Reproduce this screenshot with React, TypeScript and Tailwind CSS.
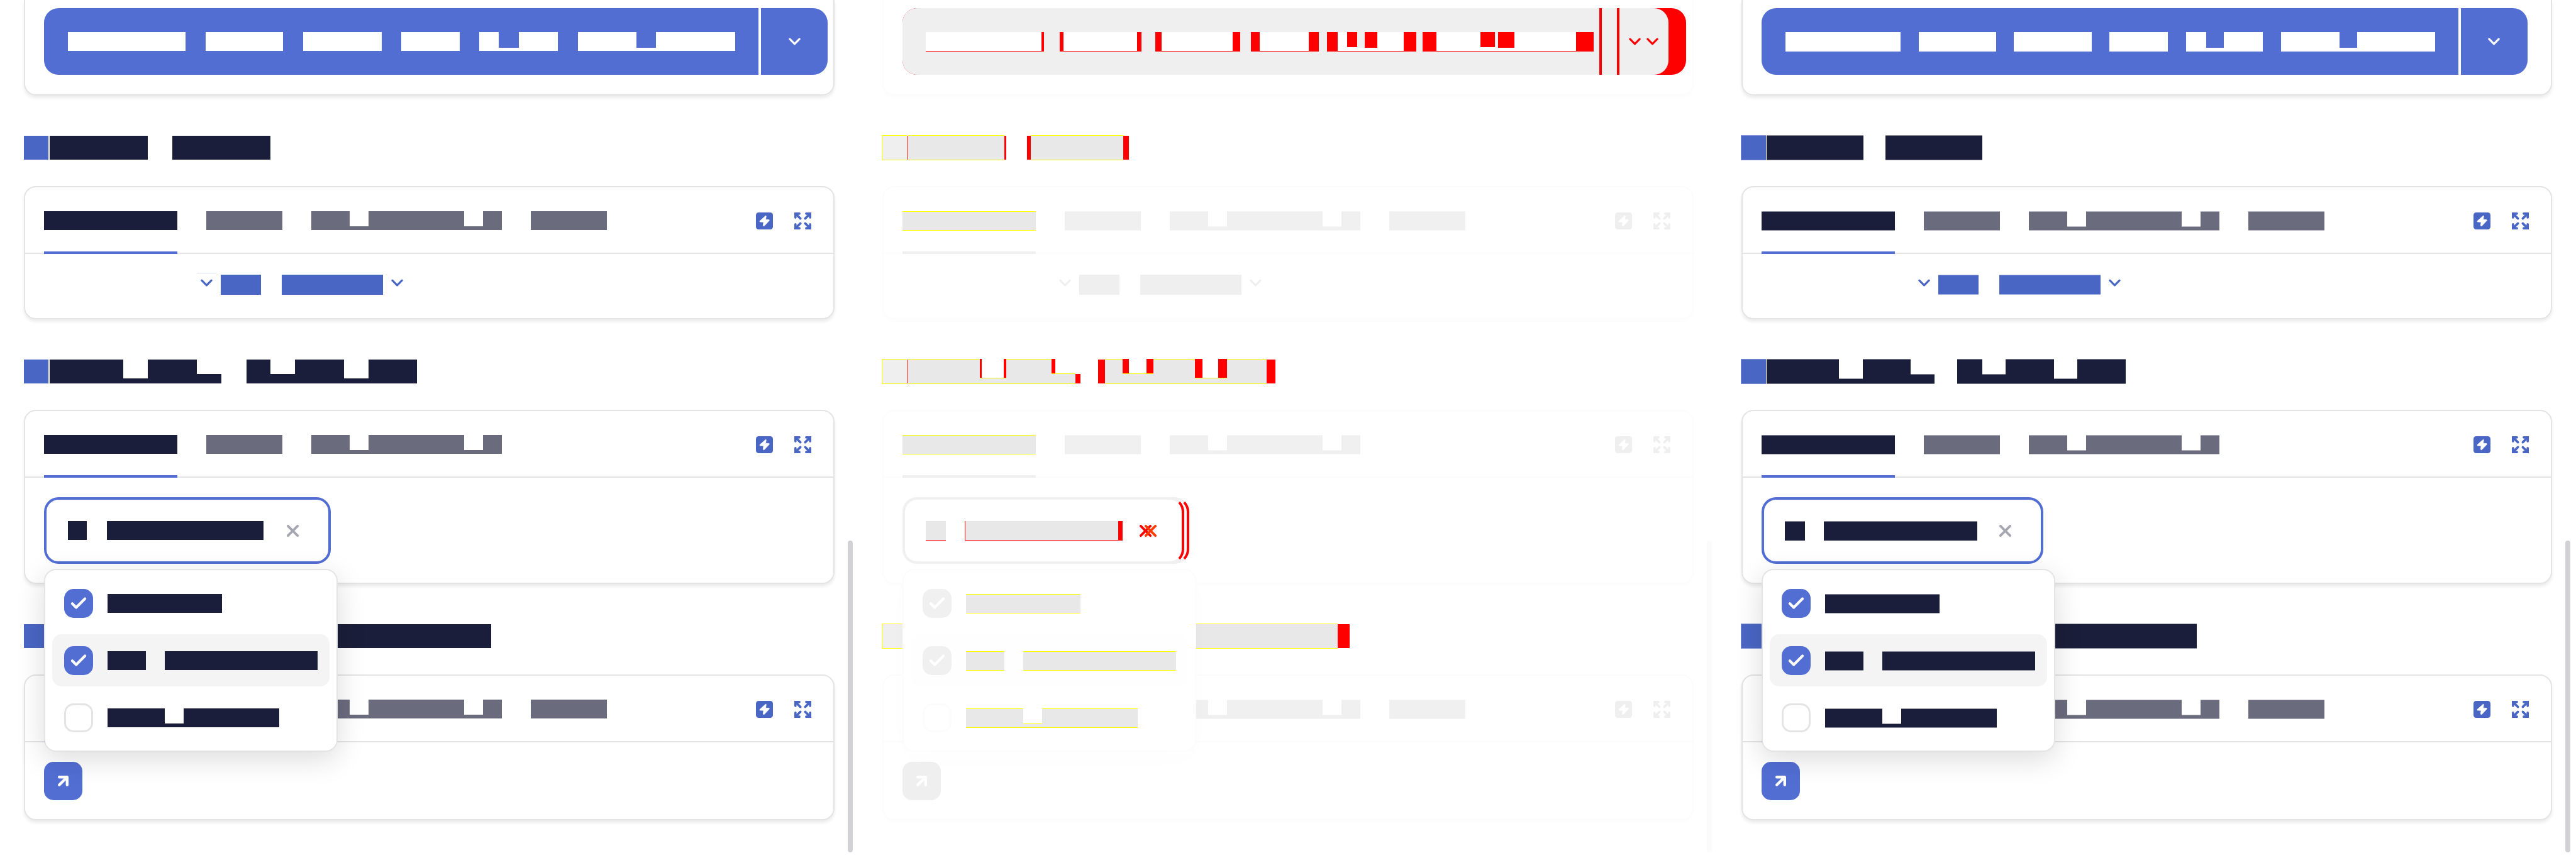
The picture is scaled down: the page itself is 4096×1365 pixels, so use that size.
import React from "react";

type Variant = "before" | "diff" | "after";

/** A stretch of masked text: width, fill, height removed from its top, fill of the removed part. */
type Run = [number, string, number?, string?];

const RED = "bg-[#ff0000]";

interface Theme {
  card: string;
  rule: string;
  primary: string;
  underline: string;
  ink: string;
  inkField: string;
  muted: string;
  link: string;
  mark: string;
  icon: string;
  field: string;
  menu: string;
  active: string;
  checked: string;
  unchecked: string;
  thumb: string;
  textHeight: string;
  headingHeight: string;
}

const themes: Record<Variant, Theme> = {
  before: {
    card: "border-[#e4e4e5] shadow-[0_4px_5px_rgba(0,0,0,0.08)]",
    rule: "border-[#e4e4e5]",
    primary: "bg-[#526ed3]",
    underline: "border-[#526ed3]",
    ink: "bg-[#1b1e3a]",
    inkField: "bg-[#1b1e3a]",
    muted: "bg-[#6a6b7d]",
    link: "bg-[#4a66c4]",
    mark: "bg-[#4a66c4]",
    icon: "text-[#4a66c4]",
    field: "border-[#526ed3]",
    menu: "border-[#e4e4e5] shadow-[0_12px_46px_rgba(0,0,0,0.14)]",
    active: "bg-[#f4f4f5]",
    checked: "bg-[#526ed3]",
    unchecked: "border-[3px] border-[#e4e4e5]",
    thumb: "bg-[#d1d1d6]",
    textHeight: "h-[30px]",
    headingHeight: "h-[38px]",
  },
  diff: {
    card: "border-[#fcfcfc] shadow-[0_4px_5px_rgba(0,0,0,0.01)]",
    rule: "border-[#fcfcfc]",
    primary: "bg-[#efefef]",
    underline: "border-[#efefef]",
    ink: "bg-[#e8e8e8] border-y border-[#ffff00]",
    inkField: "bg-[#e8e8e8] border-b border-[#ff0000]",
    muted: "bg-[#f0f0f0] border-y border-[#f6f6f6]",
    link: "bg-[#efefef]",
    mark: "bg-[#efefef] border-y border-l border-[#ffff00]",
    icon: "text-[#efefef]",
    field: "border-[#f0f0f0]",
    menu: "border-[#fcfcfc] shadow-[0_12px_46px_rgba(0,0,0,0.012)]",
    active: "bg-[#fefefe]",
    checked: "bg-[#f0f0f0]",
    unchecked: "border-[3px] border-[#fcfcfc]",
    thumb: "bg-[#fbfbfb]",
    textHeight: "-mb-px h-[31px]",
    headingHeight: "-my-px h-[40px]",
  },
  after: {
    card: "border-[#e4e4e5] shadow-[0_4px_5px_rgba(0,0,0,0.08)]",
    rule: "border-[#e4e4e5]",
    primary: "bg-[#526ed3]",
    underline: "border-[#526ed3]",
    ink: "bg-[#1b1e3a] border-y border-[#8b8c9a]",
    inkField: "bg-[#1b1e3a] border-t border-[#8b8c9a]",
    muted: "bg-[#6a6b7d] border-y border-[#b4b5be]",
    link: "bg-[#4a66c4] border-y border-[#a5b3e2]",
    mark: "bg-[#4a66c4] border-y border-l border-[#8193d6]",
    icon: "text-[#4a66c4]",
    field: "border-[#526ed3]",
    menu: "border-[#e4e4e5] shadow-[0_12px_46px_rgba(0,0,0,0.14)]",
    active: "bg-[#f4f4f5]",
    checked: "bg-[#526ed3]",
    unchecked: "border-[3px] border-[#e4e4e5]",
    thumb: "bg-[#d1d1d6]",
    textHeight: "-mb-px h-[31px]",
    headingHeight: "-my-px h-[40px]",
  },
};

function Runs({ runs, className }: { runs: Run[]; className: string }) {
  return (
    <span className={`flex shrink-0 ${className}`} aria-hidden="true">
      {runs.map(([width, fill, cut = 0, over = ""], i) => (
        <span key={i} className="flex shrink-0 flex-col" style={{ width }}>
          {cut > 0 && <span className={`shrink-0 ${over}`} style={{ height: cut }} />}
          <span className={`grow ${fill}`} />
        </span>
      ))}
    </span>
  );
}

function Chevron({ className = "" }: { className?: string }) {
  return (
    <svg viewBox="0 0 20 12" className={`h-[12px] w-[19px] shrink-0 ${className}`} fill="none" stroke="currentColor" strokeWidth="3.4" strokeLinecap="round" strokeLinejoin="round">
      <path d="M2 2l8 8 8-8" />
    </svg>
  );
}

function Cross({ className = "" }: { className?: string }) {
  return (
    <svg viewBox="0 0 20 20" className={`size-[19px] shrink-0 ${className}`} fill="none" stroke="currentColor" strokeWidth="4" strokeLinecap="round">
      <path d="M2 2l16 16M18 2L2 18" />
    </svg>
  );
}

function Bolt() {
  return (
    <svg viewBox="0 0 28 28" className="size-[27px]">
      <rect width="28" height="28" rx="4.5" fill="currentColor" />
      <path d="M15.8 5.6L6.2 14.2Q5.8 15.6 7 15.6L12.6 15.8L11.8 21.6Q12.4 23 13.6 22.4L22 13.4Q22.4 12 21.2 12L15.9 11.6L16.9 6.4Q16.8 5 15.8 5.6Z" fill="#fff" stroke="#fff" strokeWidth="0.8" strokeLinejoin="round" />
    </svg>
  );
}

function Expand() {
  return (
    <svg viewBox="0 0 28 28" className="size-[27px]" fill="none" stroke="currentColor" strokeLinecap="round">
      <path strokeWidth="3.8" d="M1.9 8.4V1.9H8.4M19.6 1.9H26.1V8.4M26.1 19.6V26.1H19.6M8.4 26.1H1.9V19.6" />
      <path strokeWidth="3.8" d="M3 3l7 7M25 3l-7 7M25 25l-7-7M3 25l7-7" />
    </svg>
  );
}

function Check() {
  return (
    <svg viewBox="0 0 48 48" className="pointer-events-none col-start-1 row-start-1 size-[46px]" fill="none" stroke="#fff" strokeWidth="4.4" strokeLinecap="round" strokeLinejoin="round">
      <path d="M13.5 24.2l6.5 6.5 14.5-14.5" />
    </svg>
  );
}

function primaryRuns(variant: Variant): Run[] {
  const w = "bg-white";
  if (variant === "before") {
    return [
      [187, w], [32, ""], [123, w], [32, ""], [125, w], [31, ""], [93, w], [31, ""],
      [31, w], [32, w, 25], [62, w], [32, ""], [93, w], [31, w, 25], [126, w],
    ];
  }
  if (variant === "after") {
    return [
      [183, w], [29, ""], [123, w], [28, ""], [124, w], [28, ""], [93, w], [29, ""],
      [32, w], [28, w, 25], [62, w], [29, ""], [93, w], [28, w, 25], [124, w],
    ];
  }
  const u = "bg-white border-b border-[#ff0000]";
  return [
    [184, u], [4, RED], [25, ""],
    [6, RED], [117, u], [7, RED], [22, ""],
    [10, RED], [113, u], [12, RED], [17, ""],
    [14, RED], [78, u], [16, RED], [13, ""],
    [17, RED], [15, u], [16, u, 24, RED], [12, u, 25], [20, u, 25, RED], [42, u], [20, RED], [10, ""],
    [22, RED], [70, u], [23, u, 24, RED], [5, u, 25], [26, u, 25, RED], [98, u], [28, RED],
  ];
}

function headingRuns(variant: Variant, index: number): Run[] {
  const { ink, mark } = themes[variant];
  const lo = 30;
  const mid = 23;
  if (variant === "before") {
    const start: Run[] = [[39, mark], [2, ""]];
    return [
      [...start, [156, ink], [39, ""], [156, ink]] as Run[],
      [...start, [117, ink], [39, ink, lo], [78, ink], [39, ink, mid], [40, ""], [38, ink], [39, ink, mid], [78, ink], [39, ink, lo], [77, ink]] as Run[],
      [...start, [702, ink]] as Run[],
    ][index];
  }
  if (variant === "after") {
    const start: Run[] = [[40, mark], [1, ""]];
    return [
      [...start, [154, ink], [35, ""], [154, ink]] as Run[],
      [...start, [115, ink], [38, ink, lo + 1], [76, ink], [38, ink, mid + 1], [36, ""], [40, ink], [37, ink, mid + 1], [77, ink], [37, ink, lo + 1], [77, ink]] as Run[],
      [...start, [684, ink]] as Run[],
    ][index];
  }
  const red = "my-px bg-[#ff0000]";
  const start: Run[] = [[40, mark], [1, ""], [1, red]];
  return [
    [...start, [153, ink], [3, red], [33, ""], [6, red], [147, ink], [9, red]] as Run[],
    [
      ...start, [114, ink], [3, ink, lo, RED], [35, ink, lo], [4, ink, lo, RED], [72, ink],
      [6, ink, mid, RED], [32, ink, mid], [8, red, mid], [28, ""], [11, red], [28, ink],
      [10, ink, mid, RED], [28, ink, mid], [11, ink, mid, RED], [66, ink], [12, ink, lo, RED],
      [25, ink, lo], [14, ink, lo, RED], [63, ink], [14, red],
    ] as Run[],
    [...start, [683, ink], [19, red]] as Run[],
  ][index];
}

function Heading({ variant, index }: { variant: Variant; index: number }) {
  return (
    <h2 className={`mt-16 mb-[42px] flex h-[38px] ${variant === "before" ? "" : "-ml-px"}`} aria-label={`Section ${index + 1}`}>
      <Runs runs={headingRuns(variant, index)} className={themes[variant].headingHeight} />
    </h2>
  );
}

function CardHeader({ variant, tabs }: { variant: Variant; tabs: number }) {
  const t = themes[variant];
  const labels: Run[][] = [
    [[212, t.ink]],
    [[121, t.muted]],
    [[61, t.muted], [30, t.muted, 24], [152, t.muted], [30, t.muted, 24], [30, t.muted]],
    [[121, t.muted]],
  ];
  return (
    <div className={`flex h-[106px] justify-between border-b-2 pr-[35px] pl-[30px] ${t.rule}`}>
      <div className="-mb-[2px] flex gap-[46px]" role="tablist">
        {labels.slice(0, tabs).map((runs, i) => (
          <button
            key={i}
            type="button"
            role="tab"
            aria-label={`Tab ${i + 1}`}
            aria-selected={i === 0}
            className={`flex items-center border-b-4 pt-1 ${i === 0 ? t.underline : "border-transparent"}`}
          >
            <Runs runs={runs} className={t.textHeight} />
          </button>
        ))}
      </div>
      <div className={`flex items-center gap-[34px] pt-[2px] ${t.icon}`}>
        <button type="button" aria-label="Run">
          <Bolt />
        </button>
        <button type="button" aria-label="Expand">
          <Expand />
        </button>
      </div>
    </div>
  );
}

function Card({ variant, tabs, children }: { variant: Variant; tabs: number; children: React.ReactNode }) {
  return (
    <section className={`rounded-[19px] border-2 ${themes[variant].card}`}>
      <CardHeader variant={variant} tabs={tabs} />
      {children}
    </section>
  );
}

function SplitButton({ variant }: { variant: Variant }) {
  const t = themes[variant];
  if (variant === "diff") {
    return (
      <div className={`flex w-[1246px] rounded-[23px] ${RED}`}>
        <div className={`flex h-[106px] w-[1218px] rounded-[23px] ${t.primary}`}>
          <button type="button" aria-label="Action" className="flex items-center pr-[9px] pl-[37px]">
            <Runs runs={primaryRuns(variant)} className="-mb-px h-[31px]" />
          </button>
          <span className={`w-1 ${RED}`} />
          <span className="w-6" />
          <span className={`w-1 ${RED}`} />
          <button type="button" aria-label="More actions" className="flex items-center gap-[9px] pl-[15px] text-[#ff0000]">
            <Chevron />
            <Chevron />
          </button>
        </div>
      </div>
    );
  }
  return (
    <div className="flex h-[106px]">
      <button type="button" aria-label="Action" className={`flex items-center rounded-l-[23px] pr-[37px] pl-[38px] ${t.primary}`}>
        <Runs runs={primaryRuns(variant)} className={variant === "before" ? "h-[30px]" : "-mb-px h-[31px]"} />
      </button>
      <button type="button" aria-label="More actions" className={`ml-1 flex w-[106px] items-center justify-center rounded-r-[23px] text-white ${t.primary}`}>
        <Chevron />
      </button>
    </div>
  );
}

function ExpandableLink({ variant }: { variant: Variant }) {
  const t = themes[variant];
  return (
    <div className="pt-[33px] pr-[30px] pb-[37px] pl-[279px]">
      <a href="#more" aria-label="Show more" className={`relative flex h-8 w-fit items-start gap-[13px] ${t.icon}`}>
        {variant === "before" && <span className="absolute -top-[3px] -left-[6px] h-px w-[31px] bg-[#dbe1f5]" />}
        <Chevron className="mt-[7px]" />
        <Runs runs={[[64, t.link], [33, ""], [161, t.link]]} className="h-8" />
        <Chevron className="mt-[7px]" />
      </a>
    </div>
  );
}

function Field({ variant }: { variant: Variant }) {
  const t = themes[variant];
  if (variant === "diff") {
    return (
      <button type="button" aria-label="Selected values" className={`relative flex h-[106px] w-[456px] items-center rounded-[23px] border-4 pl-[33px] ${t.field} border-r-[#ff0000]`}>
        <span className="absolute -top-1 -left-1 h-[106px] w-[448px] rounded-[23px] border-4 border-[#f0f0f0] border-r-[#ff0000]" />
        <Runs runs={[[32, t.inkField], [30, ""], [1, RED], [243, t.inkField], [7, RED]]} className="-mb-px h-[31px]" />
        <Cross className="ml-[27px] text-[#ff0000]" />
        <Cross className="-ml-[11px] text-[#ff3c00]" />
      </button>
    );
  }
  const before = variant === "before";
  return (
    <button
      type="button"
      aria-label="Selected values"
      className={`flex h-[106px] items-center justify-between rounded-[23px] border-4 pr-[47px] ${before ? "w-[456px] pl-[34px]" : "w-[448px] pl-[33px]"} ${t.field}`}
    >
      <Runs
        runs={before ? [[30, t.inkField], [32, ""], [249, t.inkField]] : [[32, t.inkField], [30, ""], [244, t.inkField]]}
        className={before ? "h-[30px]" : "-mb-px h-[31px]"}
      />
      <Cross className="text-[#a6a6b2]" />
    </button>
  );
}

function Menu({ variant }: { variant: Variant }) {
  const t = themes[variant];
  const options: { checked: boolean; runs: Run[] }[] = [
    { checked: true, runs: [[182, t.ink]] },
    { checked: true, runs: [[61, t.ink], [30, ""], [243, t.ink]] },
    { checked: false, runs: [[91, t.ink], [30, t.ink, 24], [152, t.ink]] },
  ];
  return (
    <div className={`absolute top-full left-0 z-10 mt-2 flex flex-col gap-2 rounded-[19px] border-2 bg-white p-[11px] ${t.menu}`}>
      {options.map(({ checked, runs }, i) => (
        <label key={i} className={`flex h-[83px] items-center gap-[23px] rounded-[15px] px-[19px] ${i === 1 ? t.active : ""}`}>
          <span className="grid">
            <input
              type="checkbox"
              aria-label={`Option ${i + 1}`}
              defaultChecked={checked}
              className={`col-start-1 row-start-1 size-[46px] appearance-none rounded-[15px] ${checked ? t.checked : t.unchecked}`}
            />
            {checked && <Check />}
          </span>
          <Runs runs={runs} className={t.textHeight} />
        </label>
      ))}
    </div>
  );
}

function Panel({ variant }: { variant: Variant }) {
  const t = themes[variant];
  return (
    <main className="relative min-h-screen px-[38px]">
      <section className={`rounded-b-[19px] border-2 border-t-0 pt-[13px] pr-2 pb-[31px] pl-[30px] ${t.card}`}>
        <SplitButton variant={variant} />
      </section>

      <Heading variant={variant} index={0} />
      <Card variant={variant} tabs={4}>
        <ExpandableLink variant={variant} />
      </Card>

      <Heading variant={variant} index={1} />
      <Card variant={variant} tabs={3}>
        <div className="px-[30px] pt-[31px] pb-[30px]">
          <div className="relative w-fit">
            <Field variant={variant} />
            <Menu variant={variant} />
          </div>
        </div>
      </Card>

      <Heading variant={variant} index={2} />
      <Card variant={variant} tabs={4}>
        <div className="px-[30px] pt-[31px] pb-[30px]">
          <button type="button" aria-label="Open" className={`block size-[61px] rounded-[15px] ${t.primary}`}>
            <svg viewBox="0 0 64 64" className="size-full" fill="none" stroke="#fff" strokeWidth="4.6" strokeLinecap="round" strokeLinejoin="round">
              <path d="M25.4 38.6l13.2-13.2M25.4 25.4h13.2v13.2" />
            </svg>
          </button>
        </div>
      </Card>

      <div className={`absolute top-[63%] right-[9px] bottom-[9px] w-2 rounded-full ${t.thumb}`} />
    </main>
  );
}

export default function App() {
  return (
    <div className="grid min-h-screen grid-cols-3 overflow-hidden bg-white font-['Liberation_Sans',sans-serif]">
      <Panel variant="before" />
      <Panel variant="diff" />
      <Panel variant="after" />
    </div>
  );
}
